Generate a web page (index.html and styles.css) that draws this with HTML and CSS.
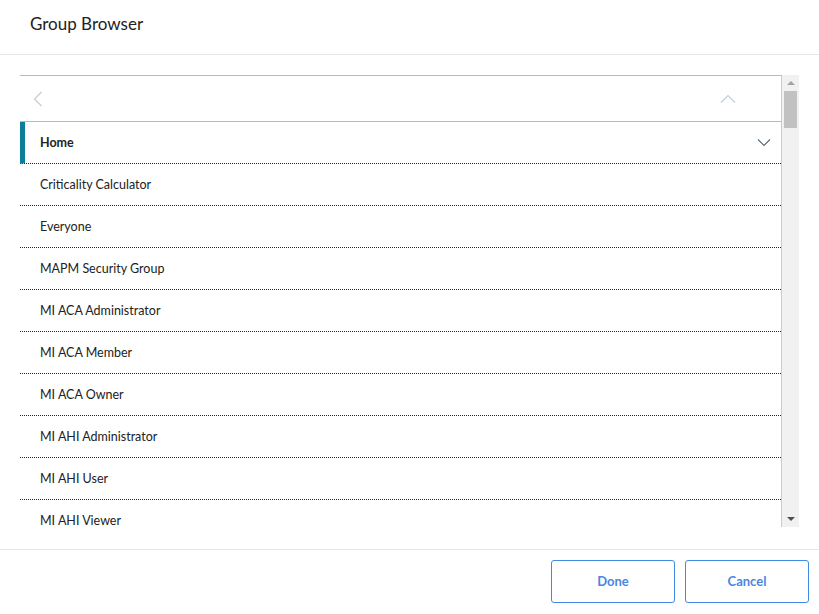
FILE: index.html
```html
<!DOCTYPE html>
<html lang="en">
<head>
    <meta charset="UTF-8">
    <meta name="viewport" content="width=device-width, initial-scale=1.0">
    <title>Group Browser</title>
    <link rel="stylesheet" href="styles.css">
</head>
<body>
    <div class="dialog">
        <div class="dialog-header">
            <h1>Group Browser</h1>
        </div>
        <div class="dialog-body">
            <div class="browser">
                <div class="browser-panel">
                    <div class="nav-row">
                        <svg class="nav-back" width="10" height="16" viewBox="0 0 10 16">
                            <polyline points="8.5,1 1.5,8 8.5,15" fill="none" stroke="#c5cdd6" stroke-width="1.2"/>
                        </svg>
                        <svg class="nav-up" width="16" height="10" viewBox="0 0 16 10">
                            <polyline points="1,8.5 8,1.5 15,8.5" fill="none" stroke="#c5cdd6" stroke-width="1.2"/>
                        </svg>
                    </div>
                    <ul class="group-list">
                        <li class="group-item active">
                            <span>Home</span>
                            <svg width="14" height="9" viewBox="0 0 14 9">
                                <polyline points="1,1.5 7,7.5 13,1.5" fill="none" stroke="#5a6b7c" stroke-width="1.2"/>
                            </svg>
                        </li>
                        <li class="group-item"><span>Criticality Calculator</span></li>
                        <li class="group-item"><span>Everyone</span></li>
                        <li class="group-item"><span>MAPM Security Group</span></li>
                        <li class="group-item"><span>MI ACA Administrator</span></li>
                        <li class="group-item"><span>MI ACA Member</span></li>
                        <li class="group-item"><span>MI ACA Owner</span></li>
                        <li class="group-item"><span>MI AHI Administrator</span></li>
                        <li class="group-item"><span>MI AHI User</span></li>
                        <li class="group-item"><span>MI AHI Viewer</span></li>
                    </ul>
                </div>
                <div class="scrollbar">
                    <div class="arrow-up"></div>
                    <div class="thumb"></div>
                    <div class="track-fill"></div>
                    <div class="arrow-down"></div>
                </div>
            </div>
        </div>
        <div class="dialog-footer">
            <button class="btn">Done</button>
            <button class="btn">Cancel</button>
        </div>
    </div>
</body>
</html>
```

FILE: styles.css
```css
body, h1, ul, li, button {
    margin: 0;
    padding: 0;
}

body {
    background: #fff;
    font-family: 'Lato', 'Liberation Sans', sans-serif;
    color: #222;
    font-size: 12.5px;
}

.dialog {
    width: 819px;
    height: 614px;
    display: flex;
    flex-direction: column;
}

.dialog-header {
    flex-shrink: 0;
    height: 54px;
    border-bottom: 1px solid #e6e6e6;
    padding-left: 30px;
    display: flex;
    align-items: center;
}

.dialog-header h1 {
    font-size: 17px;
    font-weight: normal;
    color: #222;
    margin-top: -8px;
}

.dialog-body {
    flex-shrink: 0;
    height: 452px;
    padding: 20px 20px 22px 20px;
}

.browser {
    display: flex;
    height: 452px;
    width: 779px;
}

.browser-panel {
    flex: 1;
    border-top: 1px solid #b9b9b9;
    border-right: 1px solid #c4ccd6;
    overflow: hidden;
}

.nav-row {
    height: 45px;
    border-bottom: 1px solid #b9b9b9;
    display: flex;
    align-items: center;
    justify-content: space-between;
    padding: 0 45px 0 13px;
}

.group-list {
    list-style: none;
}

.group-item {
    box-sizing: border-box;
    height: 42px;
    border-bottom: 1px dotted #222;
    display: flex;
    align-items: center;
    justify-content: space-between;
    padding: 0 10px 1px 20px;
}

.group-item.active {
    border-left: 5px solid #0b7f99;
    padding-left: 15px;
    font-weight: bold;
}

.scrollbar {
    width: 17px;
    background: #f1f1f1;
    display: flex;
    flex-direction: column;
    align-items: center;
}

.arrow-up {
    margin-top: 6px;
    width: 0;
    height: 0;
    border-left: 4px solid transparent;
    border-right: 4px solid transparent;
    border-bottom: 4px solid #a3a3a3;
}

.thumb {
    margin-top: 6px;
    width: 13px;
    height: 37px;
    background: #c1c1c1;
}

.track-fill {
    flex: 1;
}

.arrow-down {
    margin-bottom: 6px;
    width: 0;
    height: 0;
    border-left: 4px solid transparent;
    border-right: 4px solid transparent;
    border-top: 4px solid #505050;
}

.dialog-footer {
    flex: 1;
    border-top: 1px solid #e6e6e6;
    display: flex;
    justify-content: flex-end;
    gap: 10px;
    padding: 10px 10px 0 0;
}

.btn {
    width: 124px;
    height: 43px;
    padding-bottom: 2px;
    background: #fff;
    border: 1px solid #3f8ae2;
    border-radius: 3px;
    color: #4a86e2;
    font-family: 'Lato', 'Liberation Sans', sans-serif;
    font-size: 13px;
    font-weight: bold;
    cursor: pointer;
}
```
